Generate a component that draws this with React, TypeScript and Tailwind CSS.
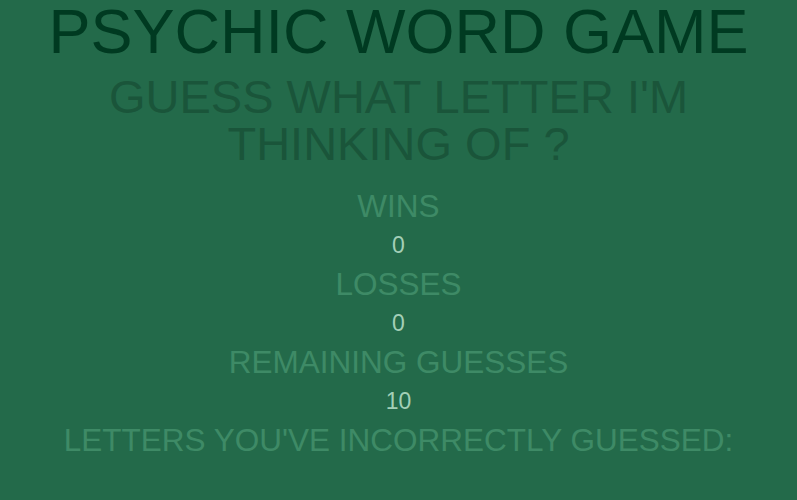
const stats = [
  { label: 'WINS', value: '0' },
  { label: 'LOSSES', value: '0' },
  { label: 'REMAINING GUESSES', value: '10' },
];

export default function App() {
  return (
    <div className="flex min-h-[500px] w-full flex-col items-center bg-[#236a4a] text-center font-['Liberation_Sans',Arial,sans-serif]">
      <h1 className="text-[63px] leading-[62px] text-[#003a21]">PSYCHIC WORD GAME</h1>
      <h2 className="mt-[11px] w-[640px] text-[47px] leading-[47px] text-[#1a553a]">
        GUESS WHAT LETTER I'M THINKING OF ?
      </h2>
      <div className="mt-[20px] flex flex-col items-center">
        {stats.map((s) => (
          <div className="flex flex-col items-center" key={s.label}>
            <div className="text-[31.5px] leading-[39px] text-[#3e8a66]">{s.label}</div>
            <div className="text-[23px] leading-[39px] text-[#a3cfb7]">{s.value}</div>
          </div>
        ))}
        <div className="text-[31.5px] leading-[39px] text-[#3e8a66]">LETTERS YOU'VE INCORRECTLY GUESSED:</div>
      </div>
    </div>
  );
}
